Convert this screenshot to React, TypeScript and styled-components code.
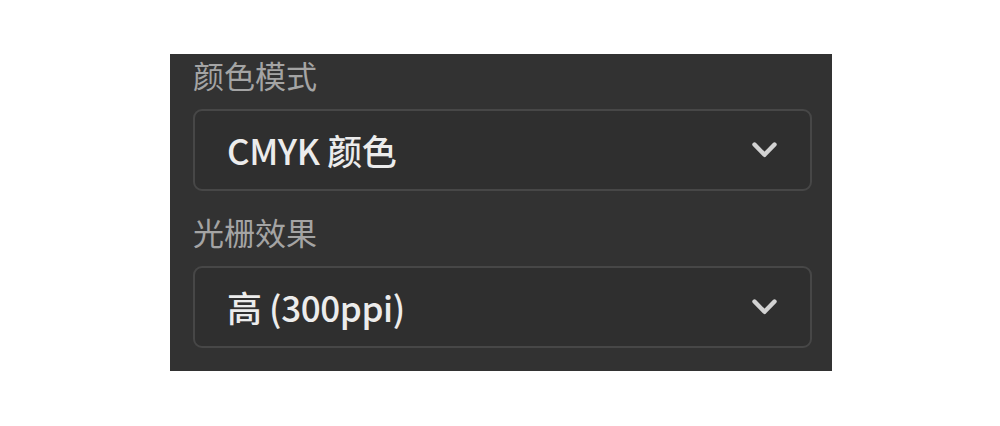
import React from "react";
import styled, { createGlobalStyle } from "styled-components";

const GlobalStyle = createGlobalStyle`
  html, body {
    margin: 0;
    padding: 0;
    background: #ffffff;
  }
  body {
    font-family: "Noto Sans CJK SC", "Noto Sans", sans-serif;
  }
`;

const Page = styled.div`
  width: 1000px;
  height: 426px;
  box-sizing: border-box;
  padding: 54px 0 0 170px;
`;

const Panel = styled.section`
  width: 662px;
  height: 317px;
  box-sizing: border-box;
  background: #323232;
  padding: 3px 20px 0 23px;
  display: flex;
  flex-direction: column;
  gap: 23px;
`;

const Field = styled.div`
  display: flex;
  flex-direction: column;
  gap: 16px;
`;

const Label = styled.div`
  font-family: "Noto Sans CJK SC", sans-serif;
  font-size: 31px;
  line-height: 36px;
  height: 36px;
  color: #a4a4a4;
`;

const Select = styled.div`
  height: 82px;
  box-sizing: border-box;
  border: 2px solid #474747;
  border-radius: 9px;
  background: #2f2f2f;
  display: flex;
  align-items: center;
  justify-content: space-between;
  padding: 0 33px 0 32px;
`;

const Value = styled.span`
  font-family: "Noto Sans CJK SC", sans-serif;
  font-size: 35px;
  font-weight: 500;
  letter-spacing: -0.4px;
  line-height: 44px;
  color: #ececec;
`;

const Chevron = () => (
  <svg width="25" height="16" viewBox="0 0 25 16" aria-hidden="true">
    <path
      d="M2.5 2.5 L12.5 12.8 L22.5 2.5"
      fill="none"
      stroke="#d2d2d2"
      strokeWidth="4.4"
      strokeLinecap="round"
      strokeLinejoin="round"
    />
  </svg>
);

type DropdownProps = { label: string; value: string };

const Dropdown = ({ label, value }: DropdownProps) => (
  <Field>
    <Label>{label}</Label>
    <Select>
      <Value>{value}</Value>
      <Chevron />
    </Select>
  </Field>
);

export default function App() {
  return (
    <>
      <GlobalStyle />
      <Page>
        <Panel>
          <Dropdown label="颜色模式" value="CMYK 颜色" />
          <Dropdown label="光栅效果" value="高 (300ppi)" />
        </Panel>
      </Page>
    </>
  );
}
